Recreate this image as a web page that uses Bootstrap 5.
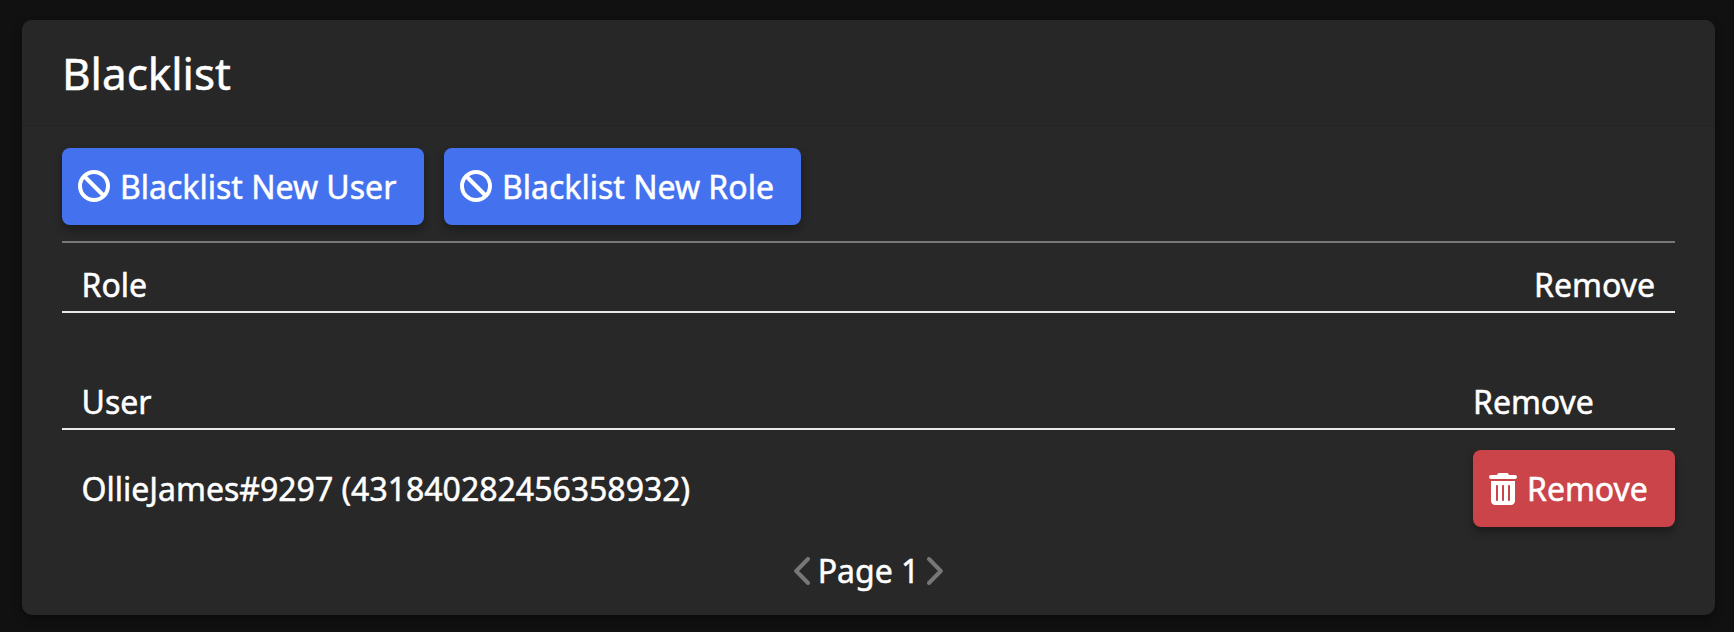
<!DOCTYPE html>
<html lang="en" data-bs-theme="dark">
<head>
<meta charset="utf-8">
<meta name="viewport" content="width=device-width, initial-scale=1">
<title>Blacklist</title>
<link href="https://cdn.jsdelivr.net/npm/bootstrap@5.3.0/dist/css/bootstrap.min.css" rel="stylesheet">
<style>
  body { background: #111; color: #fff; font-family: "Noto Sans", sans-serif; font-size: 32px; line-height: 48px; height: 632px; padding: 20px 19px 17px 22px; overflow: hidden; -webkit-text-stroke: .5px #fff; }
  .panel { background: #282828; border-radius: 10px; height: 595px; box-shadow: 0 4px 10px rgba(0,0,0,.4); --bs-card-color: #fff; }
  .panel .card-header { height: 107px; padding: 0 40px; background: #272727; border-bottom: 2px solid #252525; border-radius: 10px 10px 0 0; }
  .panel h1 { font-size: 44px; line-height: 60px; font-weight: 400; }
  .panel .card-body { padding: 21px 40px 0; }
  .actions { gap: 20px; }
  .action { height: 77px; padding: 1px 27px 0 16px; border: 0; border-radius: 8px; color: #fff; font-size: 32px; line-height: 48px; gap: 10px; box-shadow: 0 5px 8px rgba(0,0,0,.32); white-space: nowrap; }
  .action svg { flex: none; margin-bottom: 1px; }
  .action-blue svg { margin-bottom: 3px; }
  .action-blue { background: #4472ef; width: 362px; }
  .action-role { width: 357px; }
  .action-red { background: #cb444a; width: 202px; }
  .rule { height: 2px; background: #777; margin-top: 16px; }
  .head-row { border-bottom: 2px solid #e9e9e9; padding: 1px 0 0 19.5px; height: 53px; }
  .roles { margin-top: 17px; padding-right: 20px; }
  .users { margin-top: 64px; }
  .user-row { margin-top: 20px; padding-left: 19.5px; height: 77px; }
  .last-col { width: 202px; }
  .pager { margin-top: 20px; height: 48px; gap: 8px; }
  .pager svg { margin-bottom: 1px; }
</style>
</head>
<body>
<main class="card panel border-0">
  <div class="card-header d-flex align-items-center">
    <h1 class="m-0">Blacklist</h1>
  </div>
  <div class="card-body">
    <div class="d-flex actions">
      <button class="btn action action-blue d-flex align-items-center" type="button">
        <svg width="32" height="32" viewBox="0 0 32 32" fill="none" stroke="#fff" stroke-width="4"><circle cx="16" cy="16" r="14"/><path d="M6 6l20 20"/></svg>
        <span>Blacklist New User</span>
      </button>
      <button class="btn action action-blue action-role d-flex align-items-center" type="button">
        <svg width="32" height="32" viewBox="0 0 32 32" fill="none" stroke="#fff" stroke-width="4"><circle cx="16" cy="16" r="14"/><path d="M6 6l20 20"/></svg>
        <span>Blacklist New Role</span>
      </button>
    </div>
    <div class="rule"></div>
    <div class="head-row roles d-flex justify-content-between"><span>Role</span><span>Remove</span></div>
    <div class="head-row users d-flex justify-content-between"><span>User</span><span class="last-col">Remove</span></div>
    <div class="user-row d-flex justify-content-between align-items-center">
      <span>OllieJames#9297 (431840282456358932)</span>
      <button class="btn action action-red d-flex align-items-center" type="button">
        <svg width="28" height="32" viewBox="0 0 448 512" fill="#fff"><path fill-rule="evenodd" d="M135.200 17.700C140.600 6.800 151.700 0 163.800 0H284.200c12.100 0 23.200 6.800 28.600 17.700L320 32h96c17.700 0 32 14.300 32 32s-14.300 32-32 32H32C14.300 96 0 81.700 0 64S14.300 32 32 32h96zM32 128H416V448c0 35.300-28.700 64-64 64H96c-35.300 0-64-28.700-64-64zM128 192c-8.800 0-16 7.200-16 16V432c0 8.800 7.200 16 16 16s16-7.200 16-16V208c0-8.800-7.200-16-16-16zM224 192c-8.800 0-16 7.200-16 16V432c0 8.800 7.200 16 16 16s16-7.200 16-16V208c0-8.800-7.200-16-16-16zM320 192c-8.800 0-16 7.200-16 16V432c0 8.800 7.200 16 16 16s16-7.200 16-16V208c0-8.800-7.200-16-16-16z"/></svg>
        <span>Remove</span>
      </button>
    </div>
    <div class="pager d-flex justify-content-center align-items-center">
      <svg width="16" height="28" viewBox="0 0 16 28" fill="none" stroke="#777" stroke-width="4" stroke-linecap="round" stroke-linejoin="round"><path d="M14 2L2.200 14L14 26"/></svg>
      <span>Page 1</span>
      <svg width="16" height="28" viewBox="0 0 16 28" fill="none" stroke="#777" stroke-width="4" stroke-linecap="round" stroke-linejoin="round"><path d="M2 2L13.800 14L2 26"/></svg>
    </div>
  </div>
</main>
<script src="https://cdn.jsdelivr.net/npm/bootstrap@5.3.0/dist/js/bootstrap.bundle.min.js"></script>
</body>
</html>
